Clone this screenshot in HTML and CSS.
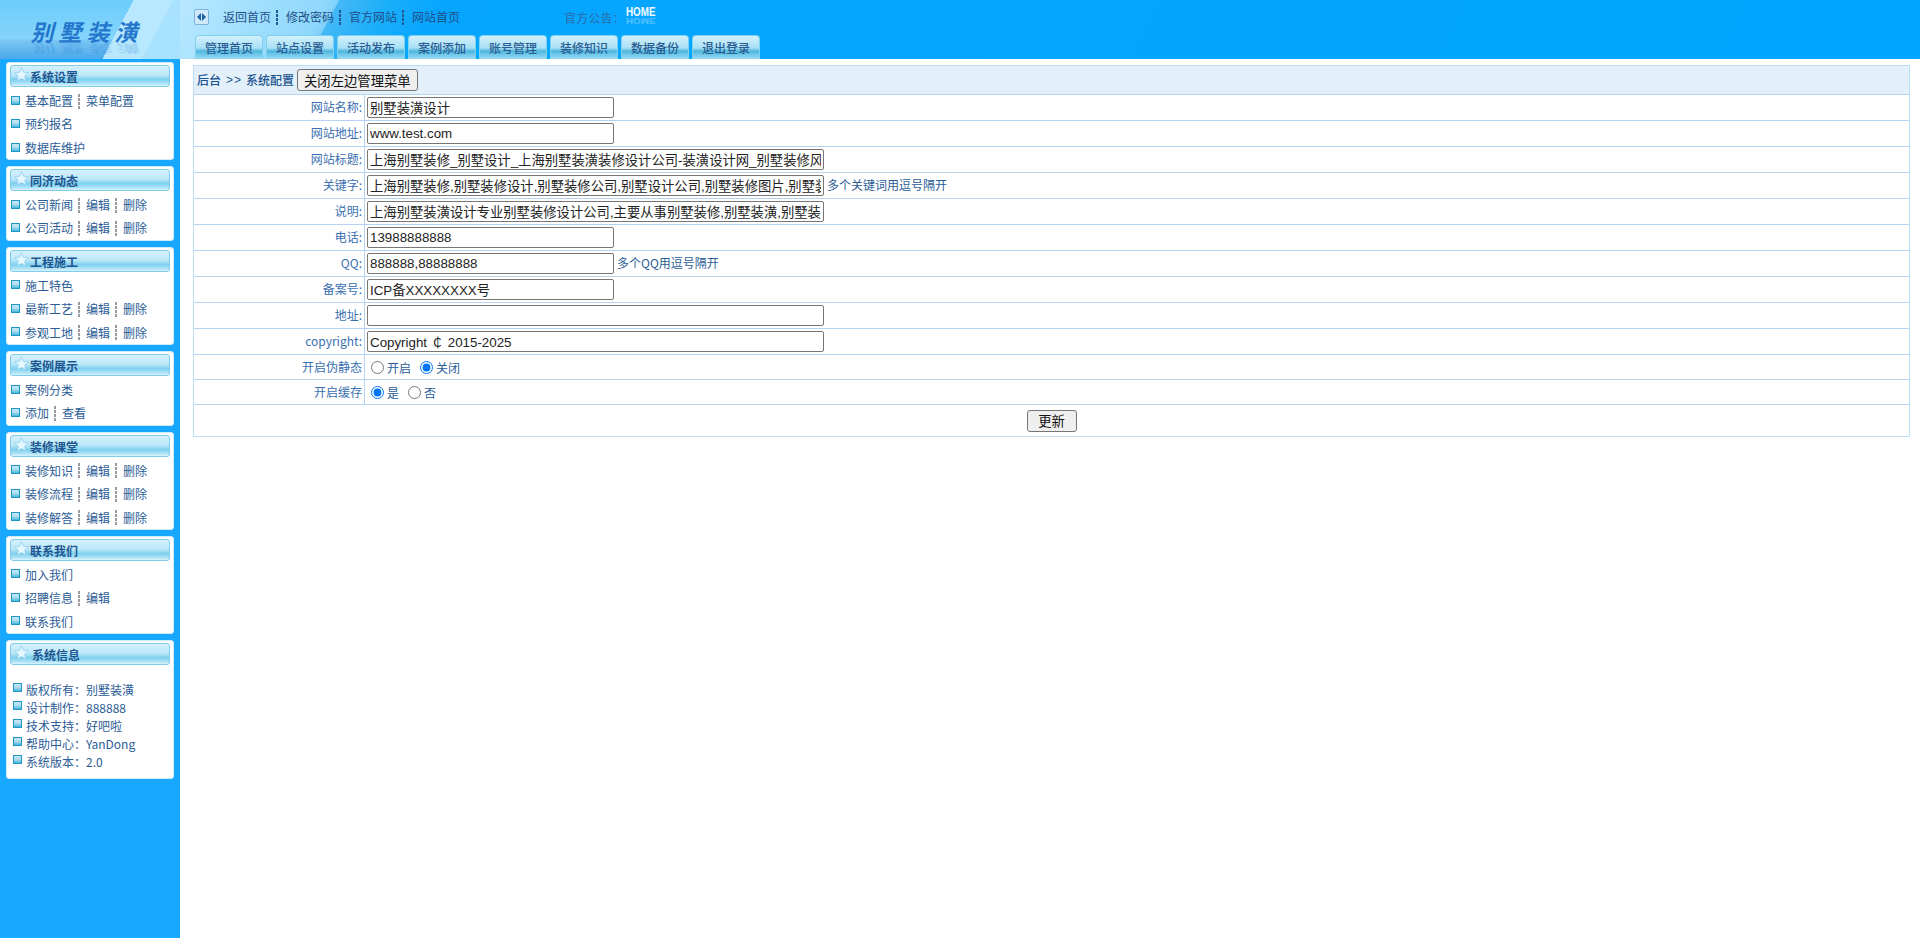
FILE: index.html
```html
<!DOCTYPE html>
<html lang="zh-CN">
<head>
<meta charset="utf-8">
<title>后台管理</title>
<link rel="stylesheet" href="styles.css">
</head>
<body>
<header class="top">
  <div class="logo">
    <span class="logo-text">别墅装潢</span>
    <span class="logo-shadow" aria-hidden="true">别墅装潢</span>
  </div>
  <div class="top-main">
    <div class="top-links">
      <span class="toggle"><i class="arrow-l"></i><i class="arrow-r"></i></span>
      <nav class="links">
        <a>返回首页</a><b class="sep"></b><a>修改密码</a><b class="sep"></b><a>官方网站</a><b class="sep"></b><a>网站首页</a>
      </nav>
      <span class="notice">官方公告：</span>
      <span class="home">HOME</span>
    </div>
    <nav class="tabs">
      <a class="tab">管理首页</a><a class="tab">站点设置</a><a class="tab">活动发布</a><a class="tab">案例添加</a><a class="tab">账号管理</a><a class="tab">装修知识</a><a class="tab">数据备份</a><a class="tab">退出登录</a>
    </nav>
  </div>
</header>
<div class="page">
  <aside class="side">
    <section class="card">
      <h3 class="card-head"><svg class="star" viewBox="0 0 16 16"><path d="M8 .8l2.200 4.800 5.200.6-3.900 3.500 1.100 5.200L8 12.300l-4.600 2.600 1.100-5.200L.6 6.200l5.200-.6z"/></svg>系统设置</h3>
      <div class="row"><i class="bullet"></i><a>基本配置</a><b class="sep"></b><a>菜单配置</a></div>
      <div class="row"><i class="bullet"></i><a>预约报名</a></div>
      <div class="row"><i class="bullet"></i><a>数据库维护</a></div>
    </section>
    <section class="card">
      <h3 class="card-head"><svg class="star" viewBox="0 0 16 16"><path d="M8 .8l2.200 4.800 5.200.6-3.900 3.500 1.100 5.200L8 12.300l-4.600 2.600 1.100-5.200L.6 6.200l5.200-.6z"/></svg>同济动态</h3>
      <div class="row"><i class="bullet"></i><a>公司新闻</a><b class="sep"></b><a>编辑</a><b class="sep"></b><a>删除</a></div>
      <div class="row"><i class="bullet"></i><a>公司活动</a><b class="sep"></b><a>编辑</a><b class="sep"></b><a>删除</a></div>
    </section>
    <section class="card">
      <h3 class="card-head"><svg class="star" viewBox="0 0 16 16"><path d="M8 .8l2.200 4.800 5.200.6-3.900 3.500 1.100 5.200L8 12.300l-4.600 2.600 1.100-5.200L.6 6.200l5.200-.6z"/></svg>工程施工</h3>
      <div class="row"><i class="bullet"></i><a>施工特色</a></div>
      <div class="row"><i class="bullet"></i><a>最新工艺</a><b class="sep"></b><a>编辑</a><b class="sep"></b><a>删除</a></div>
      <div class="row"><i class="bullet"></i><a>参观工地</a><b class="sep"></b><a>编辑</a><b class="sep"></b><a>删除</a></div>
    </section>
    <section class="card">
      <h3 class="card-head"><svg class="star" viewBox="0 0 16 16"><path d="M8 .8l2.200 4.800 5.200.6-3.900 3.500 1.100 5.200L8 12.300l-4.600 2.600 1.100-5.200L.6 6.200l5.200-.6z"/></svg>案例展示</h3>
      <div class="row"><i class="bullet"></i><a>案例分类</a></div>
      <div class="row"><i class="bullet"></i><a>添加</a><b class="sep"></b><a>查看</a></div>
    </section>
    <section class="card">
      <h3 class="card-head"><svg class="star" viewBox="0 0 16 16"><path d="M8 .8l2.200 4.800 5.200.6-3.900 3.500 1.100 5.200L8 12.300l-4.600 2.600 1.100-5.200L.6 6.200l5.200-.6z"/></svg>装修课堂</h3>
      <div class="row"><i class="bullet"></i><a>装修知识</a><b class="sep"></b><a>编辑</a><b class="sep"></b><a>删除</a></div>
      <div class="row"><i class="bullet"></i><a>装修流程</a><b class="sep"></b><a>编辑</a><b class="sep"></b><a>删除</a></div>
      <div class="row"><i class="bullet"></i><a>装修解答</a><b class="sep"></b><a>编辑</a><b class="sep"></b><a>删除</a></div>
    </section>
    <section class="card">
      <h3 class="card-head"><svg class="star" viewBox="0 0 16 16"><path d="M8 .8l2.200 4.800 5.200.6-3.900 3.500 1.100 5.200L8 12.300l-4.600 2.600 1.100-5.200L.6 6.200l5.200-.6z"/></svg>联系我们</h3>
      <div class="row"><i class="bullet"></i><a>加入我们</a></div>
      <div class="row"><i class="bullet"></i><a>招聘信息</a><b class="sep"></b><a>编辑</a></div>
      <div class="row"><i class="bullet"></i><a>联系我们</a></div>
    </section>
    <section class="card card-info">
      <h3 class="card-head"><svg class="star" viewBox="0 0 16 16"><path d="M8 .8l2.200 4.800 5.200.6-3.900 3.500 1.100 5.200L8 12.300l-4.600 2.600 1.100-5.200L.6 6.200l5.200-.6z"/></svg>系统信息</h3>
      <ul class="info">
        <li><i class="bullet"></i>版权所有：别墅装潢</li>
        <li><i class="bullet"></i>设计制作：888888</li>
        <li><i class="bullet"></i>技术支持：好吧啦</li>
        <li><i class="bullet"></i>帮助中心：YanDong</li>
        <li><i class="bullet"></i>系统版本：2.0</li>
      </ul>
    </section>
  </aside>
  <main class="main">
    <form class="config">
      <div class="crumb"><strong>后台</strong><span class="gt">&gt;&gt;</span><strong>系统配置</strong><button type="button" class="btn">关闭左边管理菜单</button></div>
      <div class="frow"><label class="flabel">网站名称:</label><div class="fval"><input class="ipt" value="别墅装潢设计"></div></div>
      <div class="frow"><label class="flabel">网站地址:</label><div class="fval"><input class="ipt" value="www.test.com"></div></div>
      <div class="frow"><label class="flabel">网站标题:</label><div class="fval"><input class="ipt wide" value="上海别墅装修_别墅设计_上海别墅装潢装修设计公司-装潢设计网_别墅装修风格效果图大全"></div></div>
      <div class="frow"><label class="flabel">关键字:</label><div class="fval"><input class="ipt wide" value="上海别墅装修,别墅装修设计,别墅装修公司,别墅设计公司,别墅装修图片,别墅装修效果图"><span class="hint">多个关键词用逗号隔开</span></div></div>
      <div class="frow"><label class="flabel">说明:</label><div class="fval"><input class="ipt wide" value="上海别墅装潢设计专业别墅装修设计公司,主要从事别墅装修,别墅装潢,别墅装修设计等服务"></div></div>
      <div class="frow"><label class="flabel">电话:</label><div class="fval"><input class="ipt" value="13988888888"></div></div>
      <div class="frow"><label class="flabel">QQ:</label><div class="fval"><input class="ipt" value="888888,88888888"><span class="hint">多个QQ用逗号隔开</span></div></div>
      <div class="frow"><label class="flabel">备案号:</label><div class="fval"><input class="ipt" value="ICP备XXXXXXXX号"></div></div>
      <div class="frow"><label class="flabel">地址:</label><div class="fval"><input class="ipt wide" value=""></div></div>
      <div class="frow"><label class="flabel">copyright:</label><div class="fval"><input class="ipt wide" value="Copyright ￠ 2015-2025"></div></div>
      <div class="frow rrow"><label class="flabel">开启伪静态</label><div class="fval"><input class="radio" type="radio" name="rw"><span class="rtxt">开启</span><input class="radio" type="radio" name="rw" checked><span class="rtxt">关闭</span></div></div>
      <div class="frow rrow"><label class="flabel">开启缓存</label><div class="fval"><input class="radio" type="radio" name="ca" checked><span class="rtxt">是</span><input class="radio" type="radio" name="ca"><span class="rtxt">否</span></div></div>
      <div class="submit"><button type="button" class="btn">更新</button></div>
    </form>
  </main>
</div>
</body>
</html>
```
FILE: styles.css
```css
* { box-sizing: border-box; }
html, body { height: 100%; }
body {
  margin: 0;
  background: #fff;
  font: 12px/1.2 "Noto Sans CJK SC", "Liberation Sans", sans-serif;
  color: #2b5c96;
  overflow: hidden;
}
.top {
  height: 59px;
  display: flex;
  background:
    linear-gradient(118deg, #b5e7ff 0, #b5e7ff 170px, #8ed7fc 290px, #7fd0fa 299px, #45b8f6 300px, #1aaefa 345px, #06a6ff 390px, #00a6ff 100%);
}
.logo {
  position: relative;
  width: 180px;
  flex: none;
  background:
    linear-gradient(118deg, transparent 118px, #b7e8fe 118px, #b7e8fe 153px, #a9e2ff 153px),
    linear-gradient(180deg, #6ccdfc 0, #85d5fb 39px, #7cc7f5 40px, #4ba8ea 59px);
}
.logo-text, .logo-shadow {
  position: absolute;
  left: 33px;
  font: 700 23px/26px "Noto Sans CJK SC", sans-serif;
  letter-spacing: 5px;
  white-space: nowrap;
  color: #2477cd;
  transform: skewX(-14deg);
}
.logo-text { top: 18px; }
.logo-shadow {
  top: 36px;
  opacity: .2;
  transform: skewX(14deg) scaleY(-.5);
}
.top-main {
  flex: 1;
  padding-left: 15px;
  display: flex;
  flex-direction: column;
  justify-content: space-between;
}
.top-links {
  display: flex;
  align-items: center;
  height: 35px;
}
.toggle {
  width: 15px;
  height: 16px;
  border: 1px solid #7fb2dc;
  border-radius: 2px;
  background: #cfe9fa;
  display: flex;
  align-items: center;
  justify-content: center;
  gap: 1px;
  margin: -1px 14px 0 -1px;
}
.arrow-l { border: 4px solid transparent; border-left: 0; border-right: 4px solid #1d5fa5; }
.arrow-r { border: 4px solid transparent; border-right: 0; border-left: 4px solid #1d5fa5; }
.links { display: flex; align-items: center; width: 341px; }
.links a { color: #1f4f88; }
.sep {
  width: 2px;
  height: 15px;
  margin: 0 6px 0 5px;
  background: repeating-linear-gradient(180deg, #9a9a9e 0 3px, transparent 3px 4px);
}
.top-links .sep {
  margin: 0 8px 0 5px;
  background: repeating-linear-gradient(180deg, #1f5a94 0 3px, transparent 3px 4px);
}
.notice { color: #2b6ca8; letter-spacing: .2px; margin-top: 1px; }
.home {
  position: relative;
  width: 28px;
  font: 700 12px/12px "Liberation Sans", sans-serif;
  color: #eef9ff;
  margin: -11px 0 0 1px;
  transform: scaleX(.82);
  transform-origin: left center;
}
.home::after {
  content: "HOME";
  position: absolute;
  left: 0;
  top: 9px;
  opacity: .3;
  transform: scaleY(-.8);
}
.tabs { display: flex; gap: 3px; height: 24px; }
.tab {
  width: 68px;
  height: 24px;
  text-align: center;
  line-height: 24px;
  font-weight: 500;
  color: #2a5c92;
  border: 1px solid #7fd2ef;
  border-bottom: 0;
  border-radius: 4px 4px 0 0;
  background: linear-gradient(180deg, #d2f1fc 0, #a8e0f5 52%, #4fb6dd 66%, #66c3e7 76%, #9adcf4 100%);
}
.page {
  display: flex;
  height: calc(100% - 59px);
}
.side {
  width: 180px;
  flex: none;
  background: #18a8ff;
  padding: 3px 6px 0;
  display: flex;
  flex-direction: column;
  gap: 6.2px;
}
.card {
  background: #fff;
  border: 1px solid #cfeaf9;
  border-radius: 3px;
  padding: 1px 2px 0;
  flex: none;
}
.card-head {
  display: flex;
  align-items: flex-end;
  position: relative;
  margin: 1px 1px 1.5px;
  height: 22px;
  padding: 0 0 0 19px;
  font-size: 12px;
  font-weight: 700;
  line-height: 19px;
  color: #1f5590;
  border: 1px solid #7fcdea;
  border-radius: 3px;
  background: linear-gradient(180deg, #d5f0fb 0, #bde8f8 45%, #7fd0ee 68%, #a5e0f6 85%, #d8f2fb 100%);
}
.star {
  position: absolute;
  left: 3px;
  top: 1px;
  width: 15px;
  height: 15px;
  fill: #e4f5fd;
  stroke: #8fd0ee;
  stroke-width: .9;
}
.row {
  display: flex;
  align-items: center;
  height: 23.5px;
  padding: 1.5px 0 0 2px;
}
.row a { color: #2b5c96; }
.bullet {
  flex: none;
  width: 9px;
  height: 9px;
  margin-right: 5px;
  border: 1px solid #1e97c4;
  background: linear-gradient(180deg, #c9e6f2 0, #a9dced 50%, #45b4dc 100%);
}
.row .bullet { margin-top: -2px; }
.card-info { height: 139px; }
.card-info .card-head { padding-left: 21px; }
.info { list-style: none; margin: 16px 0 0; padding: 0 0 0 4px; }
.info li { display: flex; align-items: center; height: 18px; white-space: pre; }
.info .bullet { margin-top: -5px; margin-right: 4px; }
.main { flex: 1; padding: 6px 10px 0 13px; background: #fff; }
.config { border: 1px solid #b9e0f7; }
.crumb {
  height: 29px;
  display: flex;
  align-items: center;
  padding-left: 3px;
  background: #e3f0fa;
  border-bottom: 1px solid #b3d4f4;
  color: #1d5590;
}
.crumb strong { font-weight: 500; }
.gt { margin: 0 4px 0 5px; font-family: "Liberation Sans", sans-serif; letter-spacing: 1px; }
.btn {
  height: 22px;
  padding: 0 6px;
  margin: 0 0 0 3px;
  font: 13.333px "Liberation Sans", "Noto Sans CJK SC", sans-serif;
  color: #111;
  background: #efefef;
  border: 1px solid #767676;
  border-radius: 3px;
}
.frow {
  display: flex;
  height: 26px;
  border-bottom: 1px solid #b3d4f4;
}
.rrow { height: 25px; }
.flabel {
  width: 171px;
  flex: none;
  text-align: right;
  padding-right: 2px;
  line-height: 24px;
  color: #3a6fb0;
  border-right: 1px solid #b3d4f4;
}
.fval {
  flex: 1;
  display: flex;
  align-items: center;
  padding-left: 2px;
}
.ipt {
  width: 247px;
  height: 21px;
  padding: 1px 2px;
  font: 13.333px "Liberation Sans", "Noto Sans CJK SC", sans-serif;
  color: #222;
  border: 1px solid #767676;
  border-radius: 2px;
  background: #fff;
}
.ipt.wide { width: 457px; }
.hint { margin-left: 3px; }
.radio { width: 13px; height: 13px; margin: 0 3px 0 4px; accent-color: #0075ff; }
.rtxt { margin: 2px 5px 0 0; }
.submit {
  height: 31px;
  display: flex;
  align-items: center;
  justify-content: center;
}
.submit .btn { margin: 0; width: 50px; }
```
